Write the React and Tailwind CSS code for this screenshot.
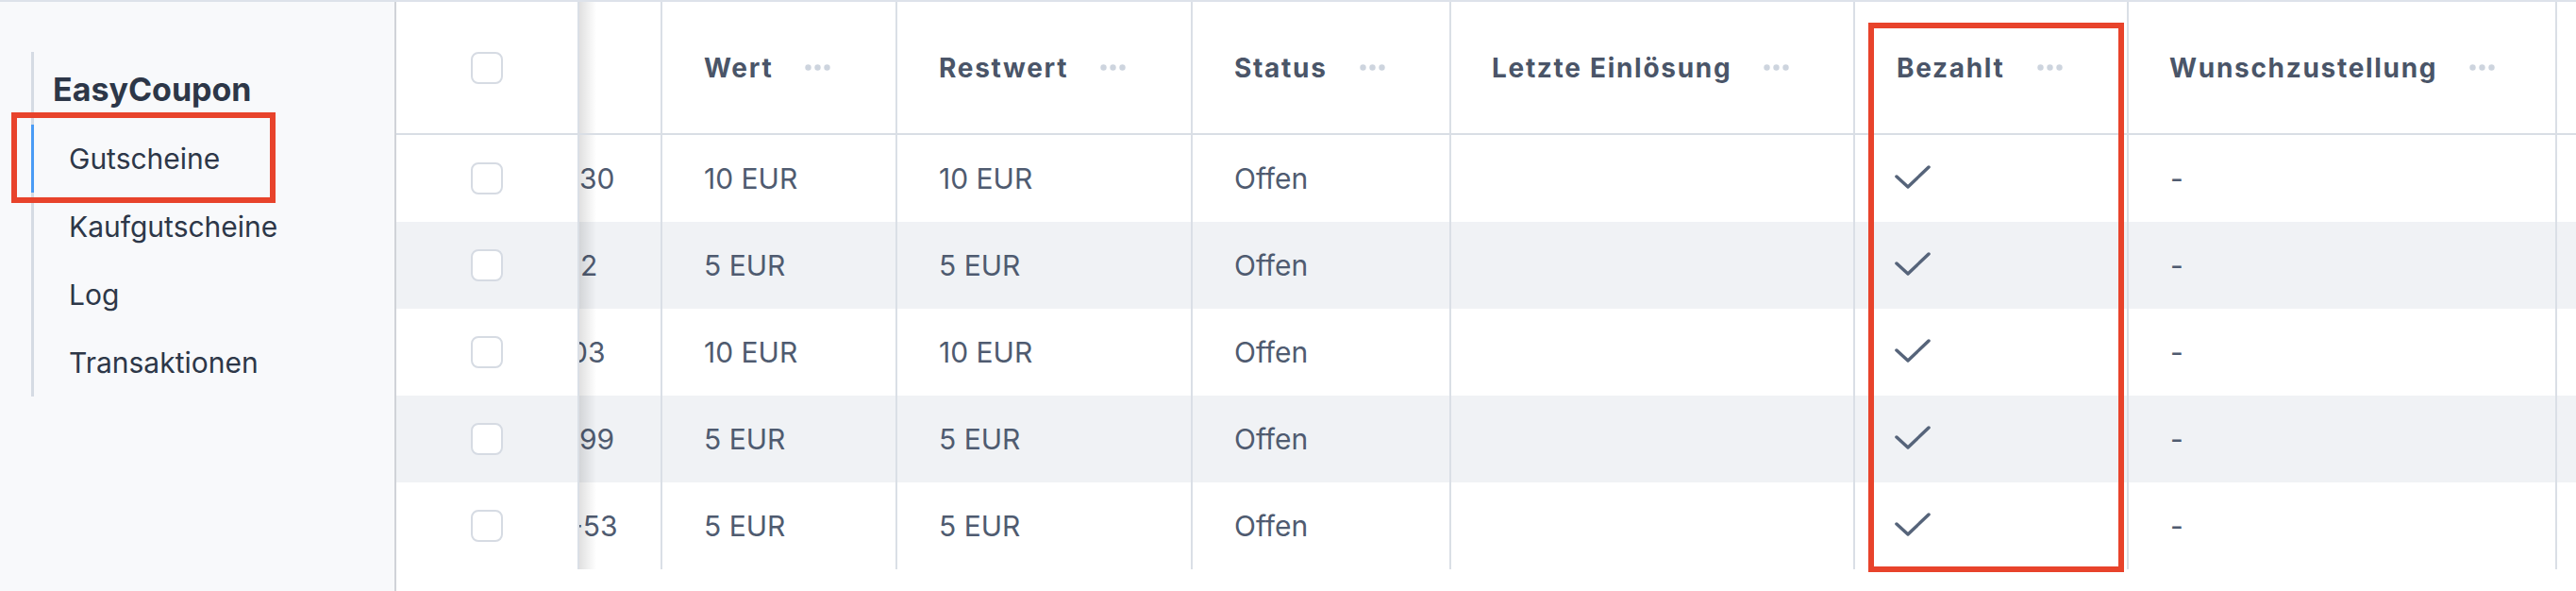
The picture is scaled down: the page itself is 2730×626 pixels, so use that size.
import React from "react";

const font = { fontFamily: "Inter, 'Noto Sans', sans-serif" };

function Dots() {
  return (
    <svg width="27" height="7" viewBox="0 0 27 7" className="shrink-0">
      <circle cx="3.5" cy="3.5" r="3.2" fill="#cdd4de" />
      <circle cx="13.5" cy="3.5" r="3.2" fill="#cdd4de" />
      <circle cx="23.5" cy="3.5" r="3.2" fill="#cdd4de" />
    </svg>
  );
}

function Checkbox() {
  return <div className="w-[34px] h-[34px] rounded-[8px] border-2 border-[#d6dbe3] bg-white" />;
}

function Check() {
  return (
    <svg width="40" height="28" viewBox="0 0 40 28" className="-ml-[3px]">
      <polyline
        points="3,12 15,23 37,2"
        fill="none"
        stroke="#56647a"
        strokeWidth="3.5"
        strokeLinecap="round"
        strokeLinejoin="round"
      />
    </svg>
  );
}

function Shadow() {
  return <div className="absolute left-0 top-0 bottom-0 w-[18px] bg-gradient-to-r from-[rgba(0,0,0,0.12)] to-transparent pointer-events-none" />;
}

const rows = [
  { code: "30", off: "ml-0", wert: "10 EUR", rest: "10 EUR" },
  { code: "2", off: "ml-[1px]", wert: "5 EUR", rest: "5 EUR" },
  { code: "03", off: "-ml-[10px]", wert: "10 EUR", rest: "10 EUR" },
  { code: "99", off: "ml-0", wert: "5 EUR", rest: "5 EUR" },
  { code: "-53", off: "-ml-[10px]", wert: "5 EUR", rest: "5 EUR" },
];

const cellBase = "shrink-0 border-r-2 border-[#dadfe6] flex items-center";

export default function App() {
  return (
    <div className="relative w-[2730px] h-[626px] flex border-t-2 border-[#dde2ea] bg-white overflow-hidden" style={font}>
      <aside className="w-[420px] shrink-0 bg-[#f8f9fb] border-r-2 border-[#d0d3d8] pl-[33px] pt-[53px]">
        <div className="border-l-[3px] border-[#d5dbe3]">
          <div className="h-[77px] pl-[20px] pt-[2px] flex items-center text-[34px] font-bold text-[#2d3748] leading-none">
            EasyCoupon
          </div>
          <div className="h-[72px] -ml-[3px] border-l-[3px] border-[#4a9bf5] pl-[37px] flex items-center text-[30px] text-[#2d3748] leading-none">
            Gutscheine
          </div>
          <div className="h-[72px] pl-[37px] flex items-center text-[30px] text-[#2d3748] leading-none">Kaufgutscheine</div>
          <div className="h-[72px] pl-[37px] flex items-center text-[30px] text-[#2d3748] leading-none">Log</div>
          <div className="h-[72px] pl-[37px] flex items-center text-[30px] text-[#2d3748] leading-none">Transaktionen</div>
        </div>
      </aside>

      <main className="flex-1 flex flex-col bg-white">
        <div className="flex h-[141px] border-b-2 border-[#d9dee5] text-[28px] font-bold tracking-[1.7px] text-[#4a5568] leading-none">
          <div className={`${cellBase} w-[194px] justify-center`}><Checkbox /></div>
          <div className={`${cellBase} w-[88px] relative`}><Shadow /></div>
          <div className={`${cellBase} w-[249px] pl-[44px] gap-[34px]`}><span>Wert</span><Dots /></div>
          <div className={`${cellBase} w-[313px] pl-[44px] gap-[34px]`}><span>Restwert</span><Dots /></div>
          <div className={`${cellBase} w-[274px] pl-[44px] gap-[34px]`}><span>Status</span><Dots /></div>
          <div className={`${cellBase} w-[428px] pl-[43px] gap-[34px]`}><span>Letzte Einlösung</span><Dots /></div>
          <div className={`${cellBase} w-[290px] pl-[44px] gap-[34px]`}><span>Bezahlt</span><Dots /></div>
          <div className={`${cellBase} w-[454px] pl-[43px] gap-[34px]`}><span>Wunschzustellung</span><Dots /></div>
          <div className="flex-1" />
        </div>

        {rows.map((r, i) => (
          <div
            key={i}
            className={`flex h-[92px] text-[30px] text-[#4f5b70] leading-none ${i % 2 === 1 ? "bg-[#f0f2f5]" : "bg-white"}`}
          >
            <div className={`${cellBase} w-[194px] justify-center`}><Checkbox /></div>
            <div className={`${cellBase} w-[88px] relative overflow-hidden`}>
              <span className={`whitespace-nowrap ${r.off}`}>{r.code}</span>
              <Shadow />
            </div>
            <div className={`${cellBase} w-[249px] pl-[44px]`}>{r.wert}</div>
            <div className={`${cellBase} w-[313px] pl-[44px]`}>{r.rest}</div>
            <div className={`${cellBase} w-[274px] pl-[44px]`}>Offen</div>
            <div className={`${cellBase} w-[428px] pl-[43px]`}></div>
            <div className={`${cellBase} w-[290px] pl-[44px]`}><Check /></div>
            <div className={`${cellBase} w-[454px] pl-[44px]`}>-</div>
            <div className="flex-1" />
          </div>
        ))}
        <div className="flex-1 bg-white" />
      </main>

      <div className="absolute left-[12px] top-[117px] w-[280px] h-[96px] border-[6px] border-[#e8432b] pointer-events-none" />
      <div className="absolute left-[1980px] top-[22px] w-[271px] h-[582px] border-[6px] border-[#e8432b] pointer-events-none" />
    </div>
  );
}
